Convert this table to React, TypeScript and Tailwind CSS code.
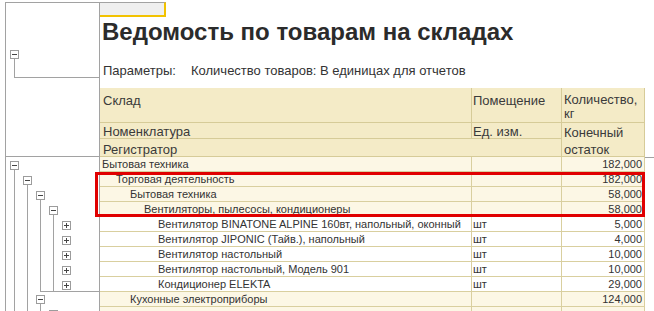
import React from "react";

const TREE = "#a2a2a2";

function TreeBox({ x, y, plus = false }: { x: number; y: number; plus?: boolean }) {
  return (
    <g>
      <rect x={x + 0.5} y={y + 0.5} width={8} height={8} fill="#ffffff" stroke="#9c9c9c" />
      <line x1={x + 2} x2={x + 7} y1={y + 4.5} y2={y + 4.5} stroke="#454545" />
      {plus && <line x1={x + 4.5} x2={x + 4.5} y1={y + 2} y2={y + 7} stroke="#454545" />}
    </g>
  );
}

function Gutter() {
  const rowTop = (i: number) => 157 + 15 * i;
  const lx = (l: number) => 10 + 13 * l;
  return (
    <svg width={100} height={311} className="shrink-0 block" viewBox="0 0 100 311">
      <g stroke={TREE} strokeWidth={1} fill="none" shapeRendering="crispEdges">
        <line x1={5} x2={100} y1={2.5} y2={2.5} />
        <line x1={5.5} x2={5.5} y1={2} y2={311} />
        <line x1={99.5} x2={99.5} y1={2} y2={311} />
        <line x1={14.5} x2={14.5} y1={59} y2={77.5} />
        <line x1={14} x2={100} y1={77.5} y2={77.5} />
        <line x1={5} x2={100} y1={156.5} y2={156.5} />
        <line x1={14.5} x2={14.5} y1={rowTop(0) + 12} y2={311} />
        <line x1={27.5} x2={27.5} y1={rowTop(1) + 12} y2={311} />
        <line x1={40.5} x2={40.5} y1={rowTop(2) + 12} y2={292} />
        <line x1={53.5} x2={53.5} y1={rowTop(3) + 12} y2={292} />
        <line x1={40} x2={100} y1={291.5} y2={291.5} />
        <line x1={40.5} x2={40.5} y1={rowTop(9) + 12} y2={311} />
      </g>
      <TreeBox x={10} y={50} />
      <TreeBox x={lx(0)} y={rowTop(0) + 4} />
      <TreeBox x={lx(1)} y={rowTop(1) + 4} />
      <TreeBox x={lx(2)} y={rowTop(2) + 4} />
      <TreeBox x={lx(3)} y={rowTop(3) + 4} />
      {[4, 5, 6, 7, 8].map((i) => (
        <TreeBox key={i} x={lx(4)} y={rowTop(i) + 4} plus />
      ))}
      <TreeBox x={lx(2)} y={rowTop(9) + 3} />
      <TreeBox x={lx(3)} y={rowTop(10) + 3} />
    </svg>
  );
}

type Row = { label: string; level: number; unit?: string; qty?: string; group: boolean };

const rows: Row[] = [
  { label: "Бытовая техника", level: 0, qty: "182,000", group: true },
  { label: "Торговая деятельность", level: 1, qty: "182,000", group: true },
  { label: "Бытовая техника", level: 2, qty: "58,000", group: true },
  { label: "Вентиляторы, пылесосы, кондиционеры", level: 3, qty: "58,000", group: true },
  { label: "Вентилятор BINATONE ALPINE 160вт, напольный, оконный", level: 4, unit: "шт", qty: "5,000", group: false },
  { label: "Вентилятор JIPONIC (Тайв.), напольный", level: 4, unit: "шт", qty: "4,000", group: false },
  { label: "Вентилятор настольный", level: 4, unit: "шт", qty: "10,000", group: false },
  { label: "Вентилятор настольный, Модель 901", level: 4, unit: "шт", qty: "10,000", group: false },
  { label: "Кондиционер ELEKTA", level: 4, unit: "шт", qty: "29,000", group: false },
  { label: "Кухонные электроприборы", level: 2, qty: "124,000", group: true },
  { label: "", level: 3, qty: "", group: true },
];

const indent = ["pl-[2px]", "pl-[16px]", "pl-[30px]", "pl-[44px]", "pl-[58px]"];

export default function App() {
  return (
    <div
      className="relative w-[654px] h-[311px] overflow-hidden bg-white flex text-[#333333]"
      style={{ fontFamily: '"Liberation Sans", Arial, sans-serif' }}
    >
      <Gutter />
      <div className="flex flex-col flex-1 min-w-0">
        <div className="shrink-0 mt-[2px] h-[15px] w-[66px] box-border bg-[#efefef] border-t border-t-[#a2a2a2] border-r-2 border-r-[#f2c200] border-b-2 border-b-[#f2c200]" />
        <div className="shrink-0 mt-[2px] h-[26px] leading-[26px] text-[24px] font-bold text-[#2b2b2b] pl-[2px] whitespace-nowrap">
          Ведомость по товарам на складах
        </div>
        <div className="shrink-0 mt-[18px] h-[15px] leading-[15px] text-[13px] text-[#333333] flex pl-[3px] whitespace-nowrap">
          <span className="w-[88px]">Параметры:</span>
          <span>Количество товаров: В единицах для отчетов</span>
        </div>
        <div className="shrink-0 mt-[10px] flex">
          <div className="w-[545px] shrink-0">
            <div className="grid grid-cols-[372px_90px_83px] grid-rows-[35px_16px_18px] bg-[#f4ebc7] text-[13px] text-[#3a3a3a] whitespace-nowrap">
              <div className="border-r border-b border-[#d6cb98] pl-[3px] pt-[5px] leading-[15px]">Склад</div>
              <div className="border-r border-b border-[#d6cb98] pl-[1px] pt-[5px] leading-[15px]">Помещение</div>
              <div className="border-r border-b border-[#d6cb98] pl-[2px] pt-[5px] leading-[14px]">
                Количество,
                <br />
                кг
              </div>
              <div className="border-r border-b border-[#d6cb98] pl-[3px] pt-[1px] leading-[15px]">Номенклатура</div>
              <div className="border-r border-b border-[#d6cb98] pl-[1px] pt-[1px] leading-[15px]">Ед. изм.</div>
              <div className="row-span-2 border-r border-b border-[#d6cb98] pl-[2px] pt-[1px] leading-[17px]">
                Конечный
                <br />
                остаток
              </div>
              <div className="col-span-2 border-r border-b border-[#d6cb98] pl-[3px] pt-[3px] leading-[15px]">Регистратор</div>
            </div>
            {rows.map((r, i) => (
              <div
                key={i}
                className={`grid grid-cols-[372px_90px_83px] h-[15px] border-b border-[#d9cf9f] text-[11px] leading-[14px] whitespace-nowrap ${
                  r.group ? "bg-[#fcf7e5]" : "bg-white"
                }`}
              >
                <div className={`border-r border-[#d9cf9f] overflow-hidden ${indent[r.level]}`}>{r.label}</div>
                <div className="border-r border-[#d9cf9f] pl-[1px]">{r.unit}</div>
                <div className="border-r border-[#d9cf9f] pr-[2px] text-right">{r.qty}</div>
              </div>
            ))}
          </div>
          <div className="flex-1">
            <div className="mt-[69px] h-px bg-[#a2a2a2]" />
          </div>
        </div>
      </div>
      <div className="absolute left-[95px] top-[172px] w-[550px] h-[45px] border-[3px] border-[#e00000]" />
    </div>
  );
}
